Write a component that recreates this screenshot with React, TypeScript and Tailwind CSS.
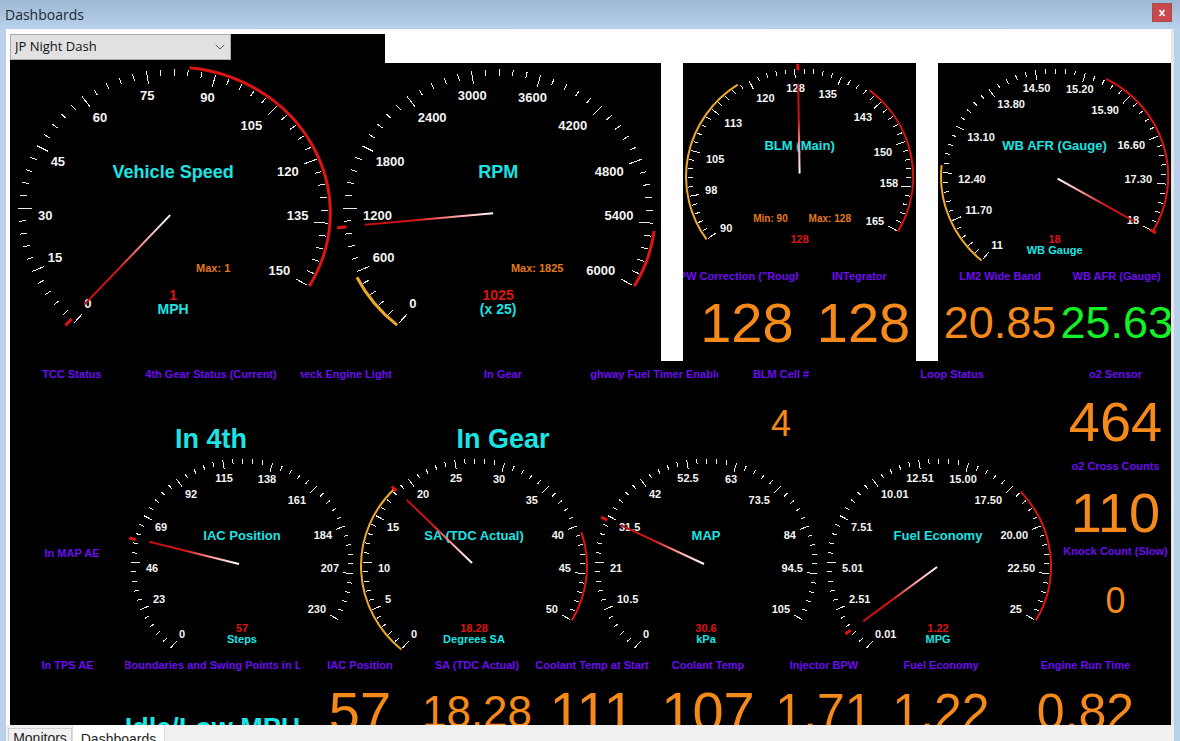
import React from "react";
import { ChevronDown } from "lucide-react";

type Arc = { from: number; to: number; color: string };
type Place = { x: number; y: number; anchor: "start" | "middle" | "end" };
type Note = { text: string; x: number; y: number };

type GaugeProps = {
  title: string;
  unit?: string;
  value: string;
  labels: string[];
  min: number;
  max: number;
  reading: number;
  hinge: [number, number];
  arcs?: Arc[];
  notes?: Note[];
  large?: boolean;
  start?: number;
  places?: Place[];
};

const RED = "#dc1414";
const AMBER = "#eba92c";
const END_ANGLE = 390;

// Label spots on the small dial, y is relative to the dial centre
const PLACES: Place[] = [
  { x: 53, y: 68, anchor: "start" },
  { x: 27, y: 33, anchor: "start" },
  { x: 20, y: 2, anchor: "start" },
  { x: 29, y: -39, anchor: "start" },
  { x: 59, y: -72, anchor: "start" },
  { x: 98, y: -88, anchor: "middle" },
  { x: 141, y: -87, anchor: "middle" },
  { x: 180, y: -66, anchor: "end" },
  { x: 206, y: -31, anchor: "end" },
  { x: 213, y: 2, anchor: "end" },
  { x: 200, y: 43, anchor: "end" },
];

const BLM_PLACES: Place[] = [
  { x: 43, y: 51, anchor: "middle" },
  { x: 28, y: 13, anchor: "middle" },
  { x: 32, y: -17, anchor: "middle" },
  { x: 50, y: -53, anchor: "middle" },
  { x: 82, y: -78, anchor: "middle" },
  { x: 112, y: -88, anchor: "middle" },
  { x: 144, y: -82, anchor: "middle" },
  { x: 179, y: -59, anchor: "middle" },
  { x: 199, y: -24, anchor: "middle" },
  { x: 205, y: 6, anchor: "middle" },
  { x: 191, y: 44, anchor: "middle" },
];

function Gauge({
  title,
  unit,
  value,
  labels,
  min,
  max,
  reading,
  hinge,
  arcs = [],
  notes = [],
  large = false,
  start = 130,
  places = PLACES,
}: GaugeProps) {
  const w = large ? 325 : 232;
  const h = large ? 298 : 200;
  const cx = large ? 163 : 116;
  const cy = large ? 150 : 113;
  const rx = large ? 157 : 113;
  const ry = large ? 146 : 109;
  const sx = large ? 1.4 : 1;
  const sy = large ? 1.33 : 1;
  const id = "needle-" + title.replace(/[^a-z]/gi, "");

  const point = (deg: number, r: number) => {
    const a = (deg * Math.PI) / 180;
    return { x: cx + Math.cos(a) * rx * r, y: cy + Math.sin(a) * ry * r };
  };

  const arcPath = (from: number, to: number) => {
    const a = point(from, 1);
    const b = point(to, 1);
    return `M${a.x} ${a.y}A${rx} ${ry} 0 ${to - from > 180 ? 1 : 0} 1 ${b.x} ${b.y}`;
  };

  const angle = start + ((END_ANGLE - start) * (reading - min)) / (max - min);
  const rad = (angle * Math.PI) / 180;
  const reach = reading === max ? 0.78 : 0.82;
  const tip = {
    x: hinge[0] + Math.cos(rad) * rx * reach,
    y: hinge[1] + Math.sin(rad) * ry * reach,
  };
  const markIn = point(angle, 0.97);
  const markOut = point(angle, 1.03);

  return (
    <svg viewBox={`0 0 ${w} ${h}`} className="block h-auto w-full overflow-visible font-bold">
      <defs>
        <linearGradient id={id} gradientUnits="userSpaceOnUse" x1={hinge[0]} y1={hinge[1]} x2={tip.x} y2={tip.y + 0.01}>
          <stop offset="0" stopColor="#ffffff" />
          <stop offset="0.3" stopColor="#ff9c9c" />
          <stop offset="0.6" stopColor="#d41616" />
          <stop offset="1" stopColor="#c01010" />
        </linearGradient>
      </defs>

      <g stroke="#ececec" strokeWidth={1} shapeRendering="crispEdges">
        {Array.from({ length: 51 }, (_, i) => {
          const deg = start + ((END_ANGLE - start) * i) / 50;
          const a = point(deg, 0.985);
          const b = point(deg, i % 5 === 0 ? 0.9 : 0.94);
          return <line key={i} x1={a.x} y1={a.y} x2={b.x} y2={b.y} />;
        })}
      </g>

      {arcs.map((arc) => (
        <path
          key={arc.from}
          d={arcPath(arc.from, arc.to)}
          fill="none"
          stroke={arc.color}
          strokeWidth={large ? 3 : 2}
        />
      ))}
      <line x1={markIn.x} y1={markIn.y} x2={markOut.x} y2={markOut.y} stroke={RED} strokeWidth={3} />

      <g fill="#f4f4f4" fontSize={large ? 13 : 11}>
        {labels.map((label, i) => (
          <text
            key={label}
            x={places[i].x * sx}
            y={cy + places[i].y * sy}
            textAnchor={places[i].anchor}
            dominantBaseline="central"
          >
            {label}
          </text>
        ))}
      </g>

      <g textAnchor="middle">
        <text x={cx} y={cy - (large ? 41 : 31)} fill="#1ce4e4" fontSize={large ? 18 : 13} dominantBaseline="central">
          {title}
        </text>
        <text x={cx} y={cy + (large ? 82 : 62)} fill={RED} fontSize={large ? 14 : 11} dominantBaseline="central">
          {value}
        </text>
        {unit && (
          <text x={cx} y={cy + (large ? 96 : 73)} fill="#1ce4e4" fontSize={large ? 14 : 11} dominantBaseline="central">
            {unit}
          </text>
        )}
        {notes.map((note) => (
          <text key={note.text} x={note.x} y={note.y} fill="#e27a1c" fontSize={large ? 11 : 10} dominantBaseline="central">
            {note.text}
          </text>
        ))}
      </g>

      <line
        x1={hinge[0]}
        y1={hinge[1]}
        x2={tip.x}
        y2={tip.y}
        stroke={`url(#${id})`}
        strokeWidth={2}
      />
    </svg>
  );
}

function Caption({ children, className = "" }: { children: React.ReactNode; className?: string }) {
  return (
    <div className={`flex h-6 min-w-0 items-center justify-center overflow-hidden text-[11px] font-bold whitespace-nowrap text-[#6c0cf0] ${className}`}>
      <span className="shrink-0">{children}</span>
    </div>
  );
}

function Readout({
  children,
  color = "text-[#f58a1a]",
  className = "",
}: {
  children: React.ReactNode;
  color?: string;
  className?: string;
}) {
  return (
    <div className={`flex min-w-0 items-center justify-center leading-none whitespace-nowrap ${color} ${className}`}>
      {children}
    </div>
  );
}

const CYAN = "text-[#1ce4e4]";

const bottomCells = [
  { caption: "In TPS AE", value: "", style: "" },
  { caption: "Boundaries and Swing Points in L", value: "Idle/Low MPH", style: "pt-8 text-[27px] font-bold", color: CYAN },
  { caption: "IAC Position", value: "57", style: "text-[56px]" },
  { caption: "SA (TDC Actual)", value: "18.28", style: "text-[44px]" },
  { caption: "Coolant Temp at Start", value: "111", style: "text-[56px]" },
  { caption: "Coolant Temp", value: "107", style: "text-[56px]" },
  { caption: "Injector BPW", value: "1.71", style: "text-[50px]" },
  { caption: "Fuel Economy", value: "1.22", style: "text-[50px]" },
  { caption: "Engine Run Time", value: "0.82", style: "text-[50px]" },
];

export default function App() {
  return (
    <div className="flex h-screen flex-col overflow-hidden bg-[#b9d1ea] px-[6px] font-['Liberation_Sans',Arial,sans-serif]">
      {/* Title bar */}
      <header className="-mx-[6px] flex h-[29px] shrink-0 items-center justify-between bg-linear-to-b from-[#9db8d3] to-[#b9d1ea] pr-2 pl-[5px]">
        <h1 className="font-['Open_Sans',sans-serif] text-[14px] text-[#1c2733]">Dashboards</h1>
        <button
          type="button"
          aria-label="Close"
          className="mb-1 flex h-[19px] w-5 items-center justify-center border border-[#a84a50] bg-[#c8484c]"
        >
          <svg viewBox="0 0 8 8" className="size-2" stroke="#fff" strokeWidth="1.6">
            <path d="M1.5 1L6.500 7M6.500 1L1.500 7" />
          </svg>
        </button>
      </header>

      <main className="min-h-0 flex-1 overflow-hidden border-r-3 border-[#e6e6e8] bg-white pt-[5px] pl-1">
        {/* Dashboard picker */}
        <div className="h-[29px] w-[375px] bg-black">
          <div className="relative h-[26px] w-[221px]">
            <select
              aria-label="Dashboard"
              className="size-full appearance-none border border-[#acacac] bg-[#e1e1e1] pl-1 font-['Open_Sans',sans-serif] text-[13px] text-[#111]"
            >
              <option>JP Night Dash</option>
            </select>
            <ChevronDown className="pointer-events-none absolute top-[5px] right-[3px] size-4 text-[#555]" strokeWidth={1.5} />
          </div>
        </div>

        {/* Top gauges */}
        <section className="grid grid-cols-[650fr_233fr_233fr] gap-x-[22px]">
          <div className="grid grid-cols-2 bg-black">
            <Gauge
              large
              title="Vehicle Speed"
              unit="MPH"
              value="1"
              labels={["0", "15", "30", "45", "60", "75", "90", "105", "120", "135", "150"]}
              min={0}
              max={150}
              reading={1}
              hinge={[160, 152]}
              arcs={[{ from: 276, to: 390, color: RED }]}
              notes={[{ text: "Max: 1", x: 203, y: 205 }]}
            />
            <Gauge
              large
              title="RPM"
              unit="(x 25)"
              value="1025"
              labels={["0", "600", "1200", "1800", "2400", "3000", "3600", "4200", "4800", "5400", "6000"]}
              min={0}
              max={6000}
              reading={1025}
              hinge={[158, 150]}
              arcs={[
                { from: 130, to: 154, color: AMBER },
                { from: 367, to: 390, color: RED },
              ]}
              notes={[{ text: "Max: 1825", x: 202, y: 205 }]}
            />
          </div>

          <div className="overflow-hidden bg-black">
            <Gauge
              title="BLM (Main)"
              value="128"
              labels={["90", "98", "105", "113", "120", "128", "135", "143", "150", "158", "165"]}
              min={90}
              max={165}
              reading={128}
              start={145}
              places={BLM_PLACES}
              hinge={[116, 110]}
              arcs={[
                { from: 145, to: 237, color: AMBER },
                { from: 308, to: 390, color: RED },
              ]}
              notes={[
                { text: "Min: 90", x: 87, y: 155 },
                { text: "Max: 128", x: 146, y: 155 },
              ]}
            />
            <div className="grid grid-cols-2">
              <Caption>BPW Correction ("Rough")</Caption>
              <Caption className="pl-1">INTegrator</Caption>
              <Readout className="h-[73px] pb-1 pl-3 text-[56px]">128</Readout>
              <Readout className="h-[73px] pb-1 pl-3 text-[56px]">128</Readout>
            </div>
          </div>

          <div className="overflow-hidden bg-black">
            <Gauge
              title="WB AFR (Gauge)"
              unit="WB Gauge"
              value="18"
              labels={["11", "11.70", "12.40", "13.10", "13.80", "14.50", "15.20", "15.90", "16.60", "17.30", "18"]}
              min={11}
              max={18}
              reading={18}
              hinge={[119, 115]}
              arcs={[
                { from: 130, to: 186, color: AMBER },
                { from: 297, to: 390, color: RED },
              ]}
            />
            <div className="grid grid-cols-2">
              <Caption className="pl-2">LM2 Wide Band</Caption>
              <Caption className="pl-2">WB AFR (Gauge)</Caption>
              <Readout className="h-[73px] pb-1 pl-2 text-[45px]">20.85</Readout>
              <Readout className="h-[73px] pb-1 pl-2 text-[45px]" color="text-[#14f028]">
                25.63
              </Readout>
            </div>
          </div>
        </section>

        <section className="bg-black pt-px">
          <div className="grid grid-cols-[1050fr_111fr]">
            <div>
              {/* Status flags */}
              <div className="grid grid-cols-[124fr_154fr_128fr_174fr_128fr_126fr_216fr]">
                <Caption>TCC Status</Caption>
                <Caption>4th Gear Status (Current)</Caption>
                <Caption className="mr-6 ml-3 justify-end!">Check Engine Light</Caption>
                <Caption>In Gear</Caption>
                <Caption>Highway Fuel Timer Enabled</Caption>
                <Caption>BLM Cell #</Caption>
                <Caption>Loop Status</Caption>
                <Readout className="col-start-2 h-[67px] pt-10 text-[27px] font-bold" color={CYAN}>
                  In 4th
                </Readout>
                <Readout className="col-start-4 h-[67px] pt-10 text-[27px] font-bold" color={CYAN}>
                  In Gear
                </Readout>
                <Readout className="col-start-6 h-[67px] pt-2 text-[36px]">4</Readout>
              </div>

              {/* Small gauges */}
              <div className="grid grid-cols-[116fr_232fr_232fr_232fr_232fr_6fr] items-center">
                <Caption className="pl-2">In MAP AE</Caption>
                <Gauge
                  title="IAC Position"
                  unit="Steps"
                  value="57"
                  labels={["0", "23", "46", "69", "92", "115", "138", "161", "184", "207", "230"]}
                  min={0}
                  max={230}
                  reading={57}
                  hinge={[113, 111]}
                />
                <Gauge
                  title="SA (TDC Actual)"
                  unit="Degrees SA"
                  value="18.28"
                  labels={["0", "5", "10", "15", "20", "25", "30", "35", "40", "45", "50"]}
                  min={0}
                  max={50}
                  reading={18.28}
                  hinge={[114, 110]}
                  arcs={[
                    { from: 130, to: 225, color: AMBER },
                    { from: 342, to: 390, color: RED },
                  ]}
                />
                <Gauge
                  title="MAP"
                  unit="kPa"
                  value="30.6"
                  labels={["0", "10.5", "21", "31.5", "42", "52.5", "63", "73.5", "84", "94.5", "105"]}
                  min={0}
                  max={105}
                  reading={30.6}
                  hinge={[114, 111]}
                />
                <Gauge
                  title="Fuel Economy"
                  unit="MPG"
                  value="1.22"
                  labels={["0.01", "2.51", "5.01", "7.51", "10.01", "12.51", "15.00", "17.50", "20.00", "22.50", "25"]}
                  min={0}
                  max={25}
                  reading={1.22}
                  hinge={[115, 114]}
                  arcs={[{ from: 317, to: 390, color: RED }]}
                />
              </div>
            </div>

            <div>
              <Caption>o2 Sensor</Caption>
              <Readout className="h-[68px] pt-1 text-[56px]">464</Readout>
              <Caption>o2 Cross Counts</Caption>
              <Readout className="h-[61px] pt-2 text-[56px]">110</Readout>
              <Caption>Knock Count (Slow)</Caption>
              <Readout className="h-[76px] text-[36px]">0</Readout>
            </div>
          </div>

          <div className="grid grid-cols-[115fr_175fr_120fr_114fr_116fr_116fr_116fr_118fr_171fr]">
            {bottomCells.map((cell) => (
              <div key={cell.caption} className="min-w-0">
                <Caption className="px-px">{cell.caption}</Caption>
                <Readout className={`h-[70px] ${cell.style}`} color={cell.color}>
                  {cell.value}
                </Readout>
              </div>
            ))}
          </div>
        </section>
      </main>

      {/* Bottom tabs */}
      <nav className="flex h-4 shrink-0 items-start bg-[#f0f0f0] pl-[2px] text-[14px] text-[#222]">
        <button type="button" className="mt-[3px] h-6 w-16 border border-[#d0d0d0] pb-1 leading-[18px]">
          Monitors
        </button>
        <button type="button" className="h-8 w-[93px] border-x border-[#dcdcdc] bg-white pb-1 leading-[18px]">
          Dashboards
        </button>
      </nav>
    </div>
  );
}
